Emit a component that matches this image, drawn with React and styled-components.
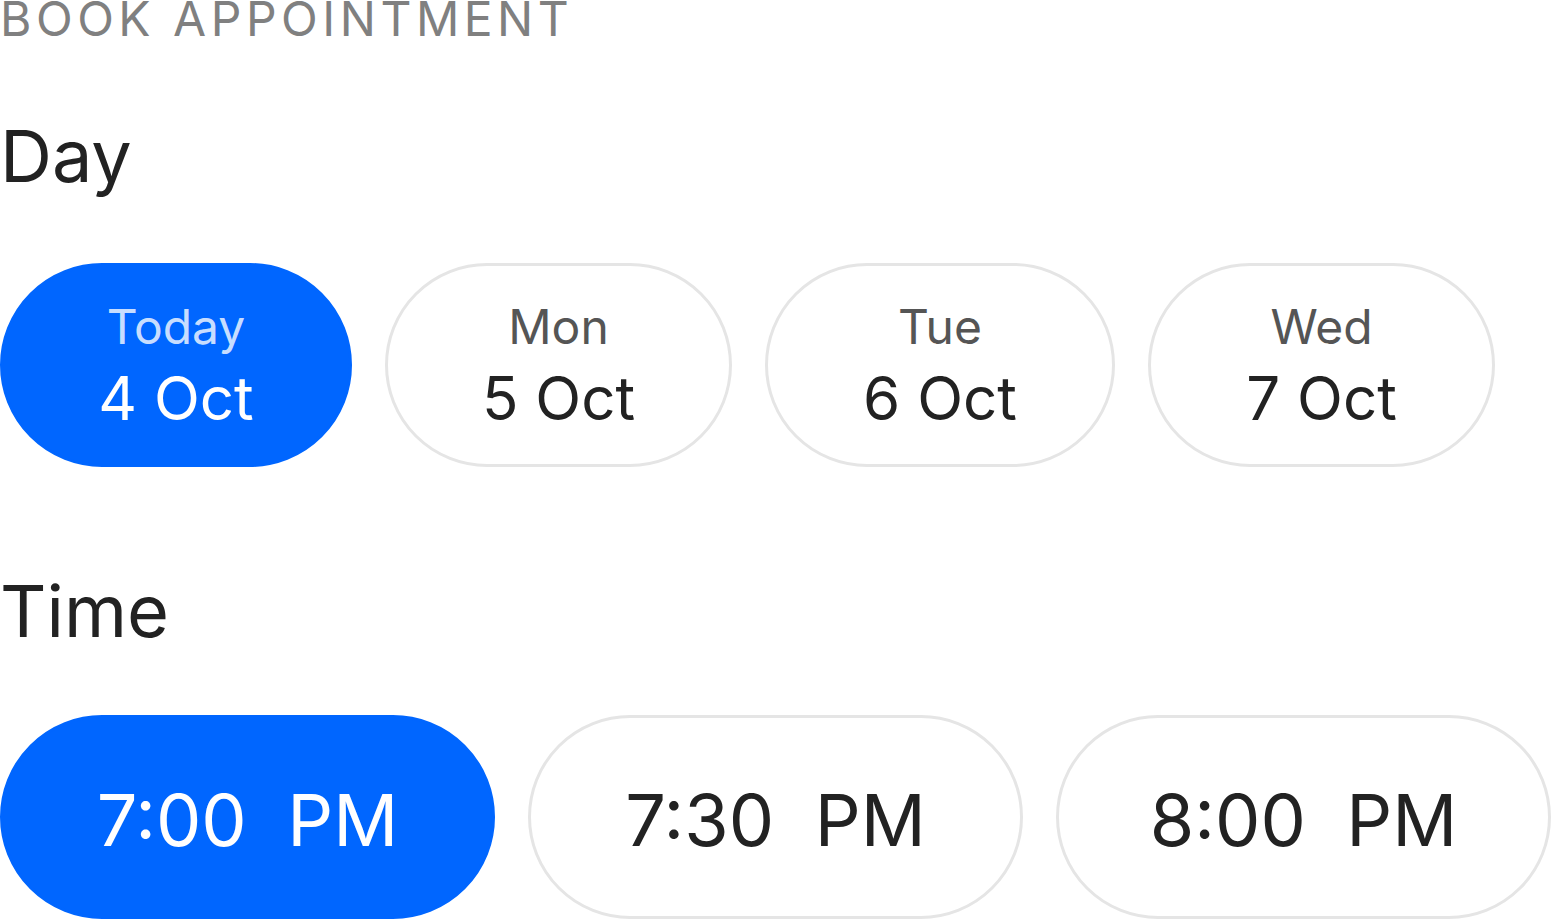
import React from 'react'
import styled, { createGlobalStyle } from 'styled-components'

const GlobalStyle = createGlobalStyle`
  html, body {
    margin: 0;
    padding: 0;
    background: #fff;
  }
  body {
    font-family: Inter, "Noto Sans", sans-serif;
    color: #222;
    overflow: hidden;
  }
`

const Page = styled.div`
  display: flex;
  flex-direction: column;
  width: 1552px;
`

const Overline = styled.div`
  margin-top: -5px;
  font-size: 48px;
  line-height: 48px;
  letter-spacing: 0.094em;
  color: #808080;
  text-transform: uppercase;
  white-space: nowrap;
`

const Heading = styled.h2`
  margin: ${p => p.$top}px 0 0;
  font-size: 72px;
  line-height: 72px;
  font-weight: 400;
  color: #222;
`

const PillRow = styled.div`
  display: flex;
  gap: 33px;
  margin-top: ${p => p.$top}px;
`

const Pill = styled.button`
  box-sizing: border-box;
  height: 204px;
  width: ${p => p.$width}px;
  flex: 0 0 auto;
  display: flex;
  flex-direction: column;
  align-items: center;
  justify-content: center;
  border-radius: 102px;
  border: 3px solid ${p => (p.$active ? '#0066ff' : '#e5e5e5')};
  background: ${p => (p.$active ? '#0066ff' : '#fff')};
  color: ${p => (p.$active ? '#fff' : '#222')};
  font-family: inherit;
  padding: 0;
  cursor: pointer;
`

const Weekday = styled.span`
  padding-top: 2px;
  font-size: 48px;
  line-height: 56px;
  color: ${p => (p.$active ? 'rgba(255,255,255,0.8)' : '#555')};
`

const DateText = styled.span`
  margin-top: 7px;
  font-size: 60px;
  line-height: 72px;
`

const TimeText = styled.span`
  padding-top: 5px;
  font-size: 72px;
  line-height: 72px;
  word-spacing: 0.28em;
`

const days = [
  { label: 'Today', date: '4 Oct', width: 352 },
  { label: 'Mon', date: '5 Oct', width: 347 },
  { label: 'Tue', date: '6 Oct', width: 350 },
  { label: 'Wed', date: '7 Oct', width: 347 },
]

const times = ['7:00 PM', '7:30 PM', '8:00 PM']

export default function App() {
  return (
    <>
      <GlobalStyle />
      <Page>
        <Overline>Book Appointment</Overline>

        <Heading $top={77}>Day</Heading>
        <PillRow $top={71}>
          {days.map((d, i) => (
            <Pill key={d.label} $active={i === 0} $width={d.width}>
              <Weekday $active={i === 0}>{d.label}</Weekday>
              <DateText>{d.date}</DateText>
            </Pill>
          ))}
        </PillRow>

        <Heading $top={108}>Time</Heading>
        <PillRow $top={68}>
          {times.map((t, i) => (
            <Pill key={t} $active={i === 0} $width={495}>
              <TimeText>{t}</TimeText>
            </Pill>
          ))}
        </PillRow>
      </Page>
    </>
  )
}
